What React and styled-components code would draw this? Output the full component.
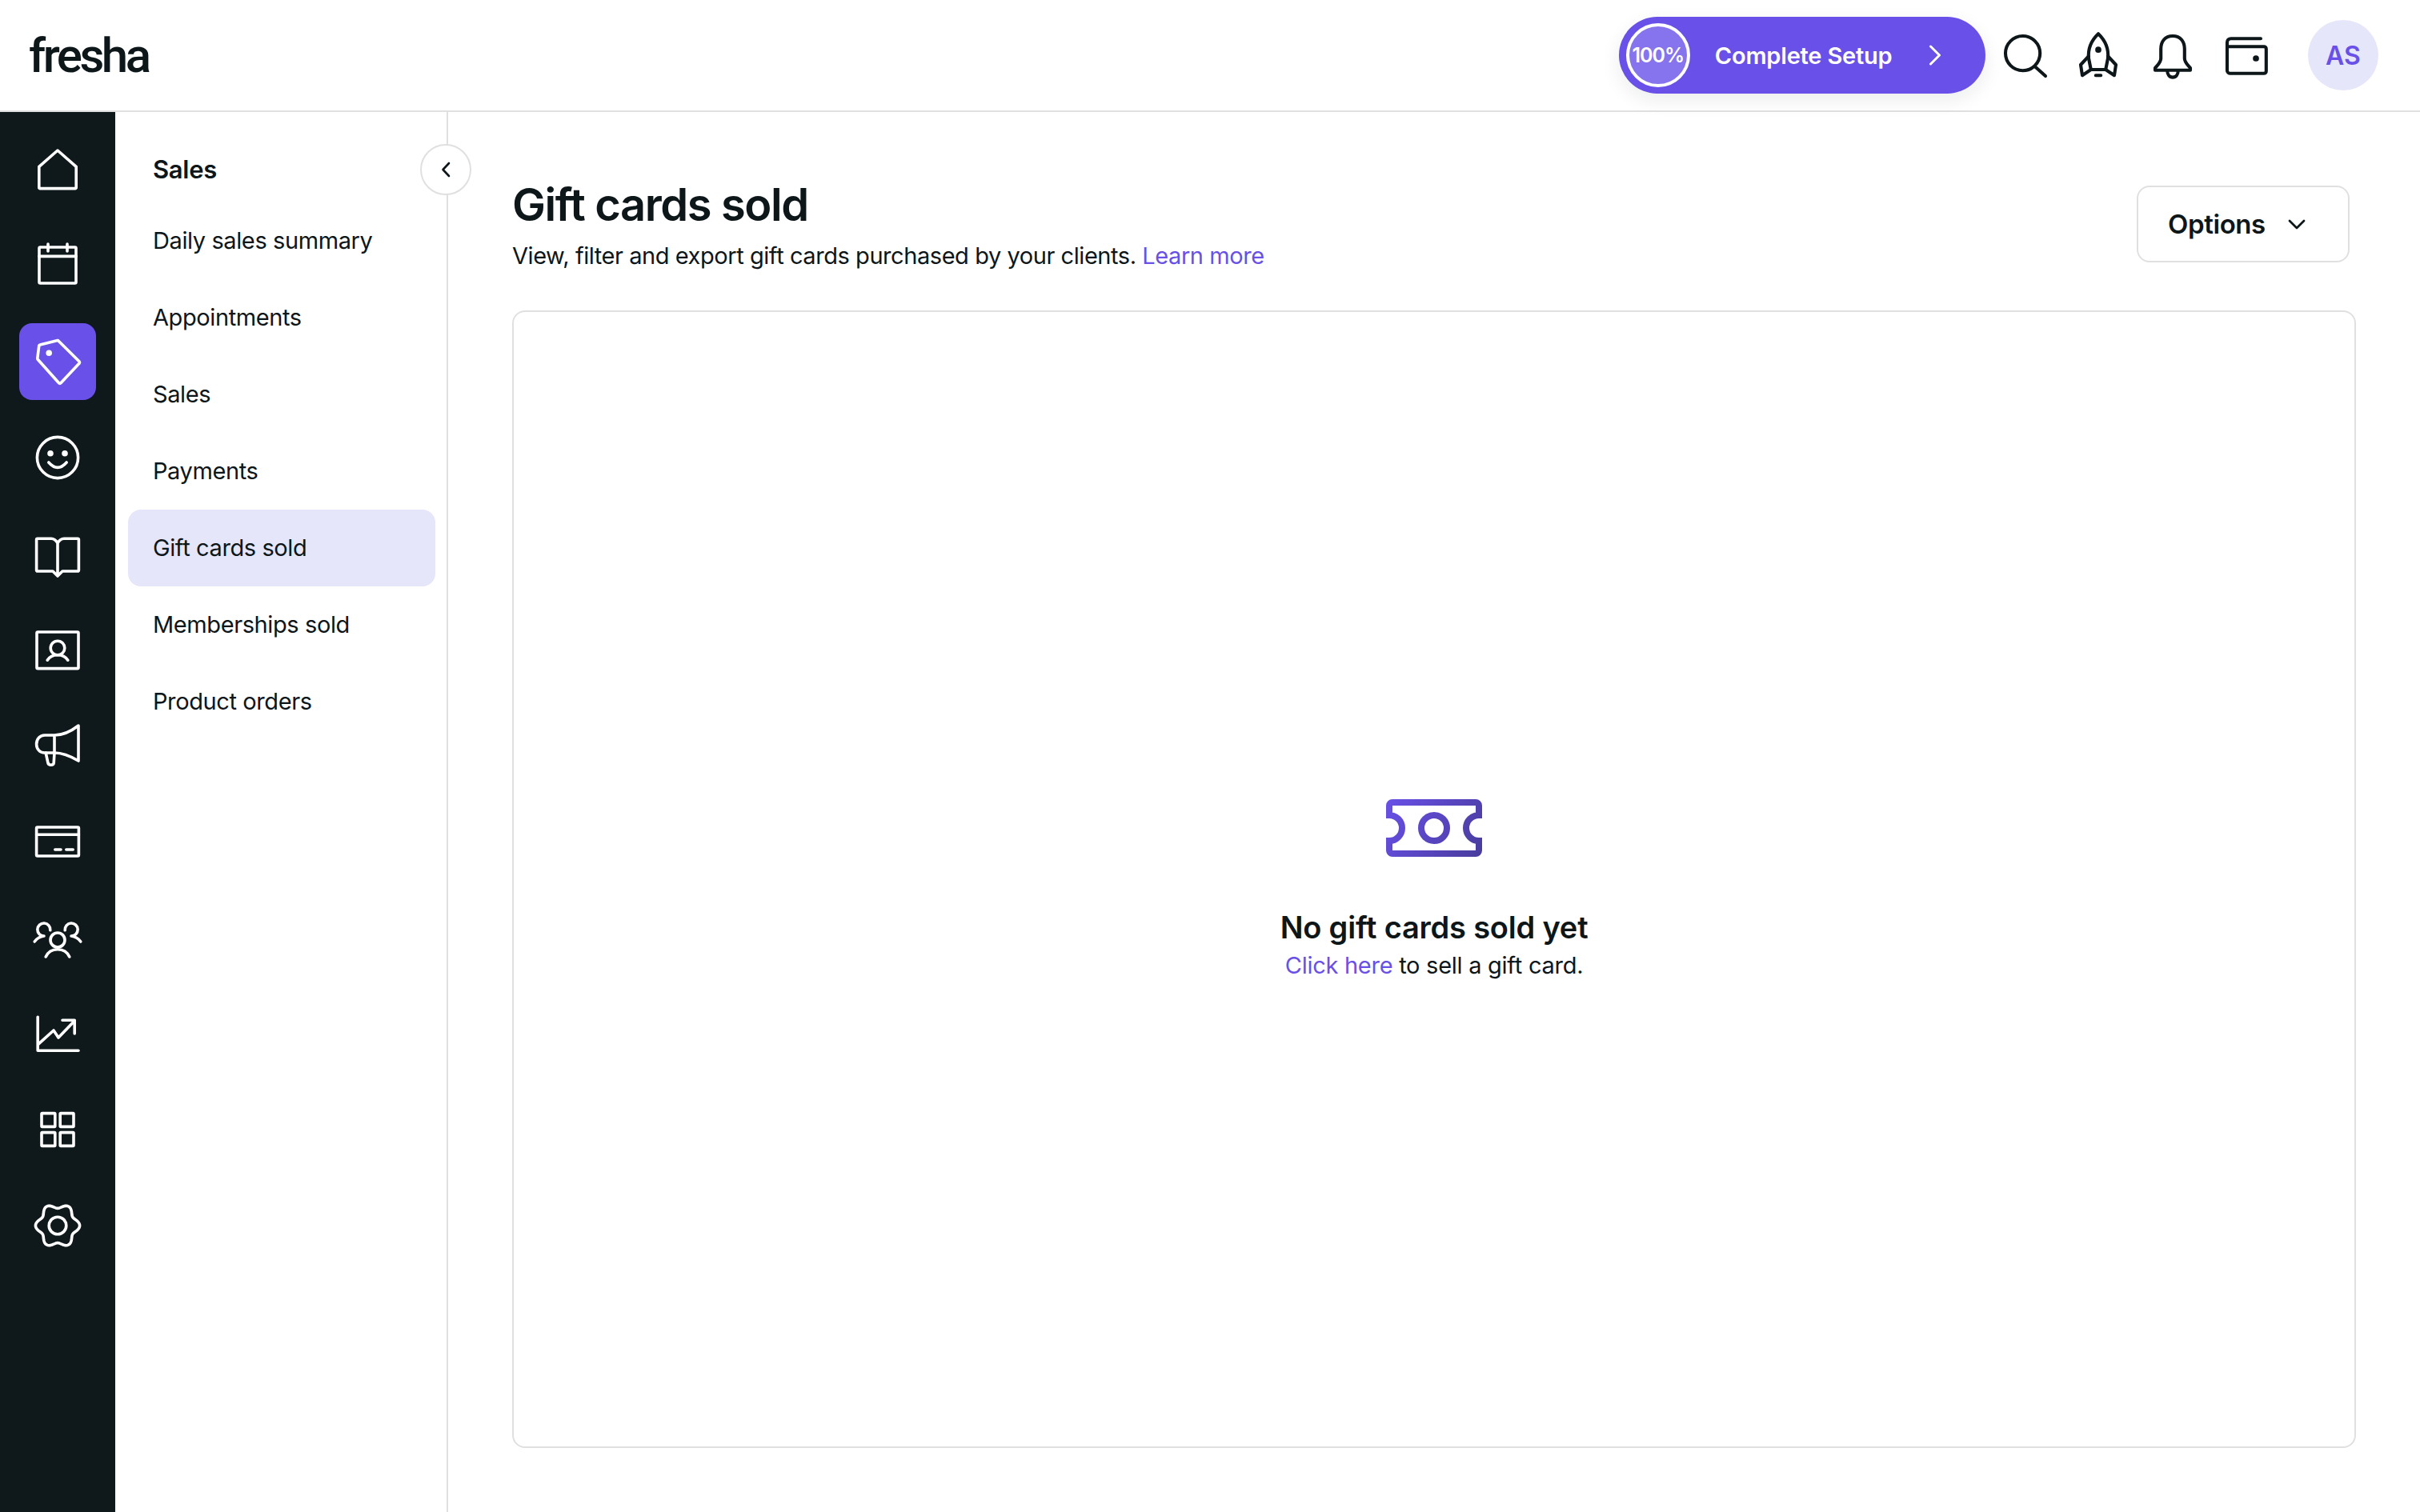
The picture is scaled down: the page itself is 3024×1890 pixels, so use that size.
import React from 'react';
import styled, { createGlobalStyle } from 'styled-components';

const GlobalStyle = createGlobalStyle`
  * { box-sizing: border-box; }
  html, body { margin: 0; padding: 0; background: #fff; }
  body { font-family: Inter, "Liberation Sans", sans-serif; color: #0d1619; }
`;

const navIcons = [
  { name: 'home' },
  { name: 'calendar' },
  { name: 'tag', active: true },
  { name: 'smile' },
  { name: 'book' },
  { name: 'contact' },
  { name: 'megaphone' },
  { name: 'card' },
  { name: 'team' },
  { name: 'chart' },
  { name: 'grid' },
  { name: 'gear' },
];

const subItems = [
  'Daily sales summary',
  'Appointments',
  'Sales',
  'Payments',
  'Gift cards sold',
  'Memberships sold',
  'Product orders',
];

// six soft lobes, the settings cog is wider than it is tall
const gearPath = () => {
  const pts = [];
  for (let i = 0; i < 120; i++) {
    const a = (i / 120) * Math.PI * 2;
    const r = 12.3 + 1.5 * Math.cos(6 * a);
    pts.push(`${(16 + r * Math.cos(a)).toFixed(2)} ${(16 + r * Math.sin(a)).toFixed(2)}`);
  }
  return `M${pts.join('L')}Z`;
};

const glyphs = {
  home: <path d="M16 4 L27.6 14.2 V27.2 a.6.6 0 0 1 -.6 .6 H5 a.6.6 0 0 1 -.6 -.6 V14.2 Z" />,
  calendar: (
    <>
      <rect x="4.5" y="4.5" width="23" height="22.5" rx=".6" />
      <path d="M4.5 10.2 H27.5 M10 2.5 V7 M22 2.5 V7" />
    </>
  ),
  tag: (
    <>
      <path d="M5 5.5 L16 2.8 a1 1 0 0 1 .6 .3 L29.6 16 a.8.8 0 0 1 0 1 L18 29.4 a.8.8 0 0 1 -1.2 0 L3.6 14.6 a1 1 0 0 1 -.2 -.7 L4.4 6 a.8.8 0 0 1 .6 -.5 Z" />
      <circle cx="10.6" cy="10.6" r="1" fill="currentColor" />
    </>
  ),
  smile: (
    <>
      <circle cx="16" cy="16" r="12.8" />
      <circle cx="11.5" cy="13.4" r="1" fill="currentColor" />
      <circle cx="20.5" cy="13.4" r="1" fill="currentColor" />
      <path d="M10.4 19 Q16 25.4 21.6 19" />
    </>
  ),
  book: (
    <path d="M16 9.4 C15 7.6 13.6 6.6 12 6.6 H3.4 a.6.6 0 0 0 -.6 .6 V26.4 a.6.6 0 0 0 .6 .6 H13 L16 30 L19 27 H28.6 a.6.6 0 0 0 .6 -.6 V7.2 a.6.6 0 0 0 -.6 -.6 H20 C18.4 6.6 17 7.6 16 9.4 Z M16 9.4 V28" />
  ),
  contact: (
    <>
      <rect x="3" y="5" width="26" height="22.8" rx=".6" />
      <circle cx="16" cy="15" r="4.4" />
      <path d="M9.6 22.6 C11 20.4 13.2 19.4 16 19.4 C18.8 19.4 21 20.4 22.4 22.6" />
    </>
  ),
  megaphone: (
    <>
      <path d="M29 3.5 C24.6 6.9 20 9.5 14 9.5 H8 C4.8 9.5 2.8 11.9 2.8 15.1 C2.8 18.1 4.8 20.5 8 20.5 H14 C20 20.5 24.6 22.9 29 25.5 Z M14 9.5 V20.5" />
      <path d="M8.6 20.5 L10 26.9 C10.4 28.5 13.4 28.5 13.6 26.9 L14 20.5" />
    </>
  ),
  card: (
    <>
      <rect x="2.8" y="7" width="26.4" height="18" rx=".6" />
      <path d="M2.8 11.6 H29.2 M14.4 21 H18 M21.4 21 H25.6" />
    </>
  ),
  team: (
    <>
      <circle cx="16" cy="17.5" r="4.5" />
      <path d="M8.6 28 C10 25 12.6 23.4 16 23.4 C19.4 23.4 22 25 23.4 28" />
      <path d="M11.4 11.4 A4 4 0 1 0 7.5 15 C5 15.3 3 16.6 1.6 18.5" />
      <path d="M20.6 11.4 A4 4 0 1 1 24.5 15 C27 15.3 29 16.6 30.4 18.5" />
    </>
  ),
  chart: (
    <>
      <path d="M3.6 5.6 V26.6 H29" />
      <path d="M4 22.6 L13.5 14 L16.5 18.5 L26 8.6 M19 7.6 H26.6 V16" />
    </>
  ),
  grid: (
    <>
      <rect x="6" y="5.8" width="8.4" height="8.4" rx=".4" />
      <rect x="17.6" y="5.8" width="8.4" height="8.4" rx=".4" />
      <rect x="6" y="17.8" width="8.4" height="8.4" rx=".4" />
      <rect x="17.6" y="17.8" width="8.4" height="8.4" rx=".4" />
    </>
  ),
  gear: (
    <>
      <path d={gearPath()} />
      <circle cx="16" cy="16" r="5.4" />
    </>
  ),
  search: (
    <>
      <circle cx="14.8" cy="14.8" r="10.8" />
      <path d="M22.6 23.2 L29 29" />
    </>
  ),
  rocket: (
    <>
      <path d="M16 2.6 C20.6 7 22.6 12 22 18 L20.6 25 H11.4 L10 18 C9.4 12 11.4 7 16 2.6 Z" />
      <path d="M10 16.6 L5 22 L6 28.6 L11.4 25 M22 16.6 L27 22 L26 28.6 L20.6 25 M14.4 28.6 H17.6" />
      <circle cx="16" cy="12.6" r=".9" fill="currentColor" />
    </>
  ),
  bell: (
    <path d="M16 4 C11 4 8.6 7.6 8.6 12 V18 C8.6 20.6 6.6 22 5 24 V25.4 H27 V24 C25.4 22 23.4 20.6 23.4 18 V12 C23.4 7.6 21 4 16 4 Z M12.6 25.4 C12.6 28 14 29.8 16 29.8 C18 29.8 19.4 28 19.4 25.4" />
  ),
  wallet: (
    <>
      <path d="M25 5.6 H6.4 C5 5.6 4 6.6 4 8 V25.6 C4 26.6 4.9 27.4 6 27.4 H27 C27.8 27.4 28.4 26.8 28.4 26 V12 C28.4 11.2 27.8 10.6 27 10.6 H4.4" />
      <circle cx="22" cy="18" r=".9" fill="currentColor" />
    </>
  ),
};

const Glyph = ({ name }) => <IconSvg viewBox="0 0 32 32">{glyphs[name]}</IconSvg>;

const App = () => (
  <Page>
    <GlobalStyle />
    <TopBar>
      <Logo>fresha</Logo>
      <TopActions>
        <SetupButton>
          <Progress>100%</Progress>
          <SetupLabel>Complete Setup</SetupLabel>
          <svg width="16" height="26" viewBox="0 0 16 26" fill="none" stroke="#fff" strokeWidth="3" strokeLinecap="round" strokeLinejoin="round">
            <path d="M2.5 2 L13.5 13 L2.5 24" />
          </svg>
        </SetupButton>
        <TopIcons>
          {['search', 'rocket', 'bell', 'wallet'].map((n) => (
            <TopIcon key={n}>
              <Glyph name={n} />
            </TopIcon>
          ))}
        </TopIcons>
        <Avatar>AS</Avatar>
      </TopActions>
    </TopBar>
    <Body>
      <Rail>
        {navIcons.map((item) => (
          <RailItem key={item.name} $active={item.active}>
            <Glyph name={item.name} />
          </RailItem>
        ))}
      </Rail>
      <SubNav>
        <SubTitle>Sales</SubTitle>
        {subItems.map((label) => (
          <SubItem key={label} $active={label === 'Gift cards sold'}>
            {label}
          </SubItem>
        ))}
        <Collapse>
          <svg width="12" height="20" viewBox="0 0 12 20" fill="none" stroke="#0d1619" strokeWidth="2.6" strokeLinecap="round" strokeLinejoin="round">
            <path d="M10 2 L2.5 10 L10 18" />
          </svg>
        </Collapse>
      </SubNav>
      <Main>
        <PageHead>
          <div>
            <Title>Gift cards sold</Title>
            <Subtitle>
              View, filter and export gift cards purchased by your clients. <LinkText>Learn more</LinkText>
            </Subtitle>
          </div>
          <OptionsButton>
            Options
            <svg width="22" height="13" viewBox="0 0 22 13" fill="none" stroke="#0d1619" strokeWidth="2.8" strokeLinecap="round" strokeLinejoin="round">
              <path d="M2 2 L11 11 L20 2" />
            </svg>
          </OptionsButton>
        </PageHead>
        <EmptyCard>
          <svg width="120" height="72" viewBox="0 0 120 72" fill="none">
            <defs>
              <linearGradient id="ticket" gradientUnits="userSpaceOnUse" x1="0" y1="0" x2="120" y2="72">
                <stop offset="0" stopColor="#6950e8" />
                <stop offset="1" stopColor="#483c9c" />
              </linearGradient>
            </defs>
            <g stroke="url(#ticket)" strokeWidth="8">
              <path d="M8 4 H112 a4 4 0 0 1 4 4 V20 a16 16 0 0 0 0 32 V64 a4 4 0 0 1 -4 4 H8 a4 4 0 0 1 -4 -4 V52 a16 16 0 0 0 0 -32 V8 a4 4 0 0 1 4 -4 Z" />
              <circle cx="60" cy="36" r="16" />
            </g>
          </svg>
          <EmptyTitle>No gift cards sold yet</EmptyTitle>
          <EmptyText>
            <LinkText>Click here</LinkText> to sell a gift card.
          </EmptyText>
        </EmptyCard>
      </Main>
    </Body>
  </Page>
);

const Page = styled.div`
  width: 3024px;
  height: 1890px;
  overflow: hidden;
  display: flex;
  flex-direction: column;
`;

const TopBar = styled.header`
  height: 140px;
  flex: none;
  display: flex;
  align-items: center;
  justify-content: space-between;
  padding: 0 52px 0 36px;
  border-bottom: 2px solid #e0e0e0;
`;

const Logo = styled.div`
  margin-top: 2px;
  font-family: Roboto, sans-serif;
  font-size: 60px;
  font-weight: 500;
  letter-spacing: -3.5px;
  line-height: 1;
`;

const TopActions = styled.div`
  display: flex;
  align-items: center;
`;

const SetupButton = styled.button`
  width: 458px;
  height: 96px;
  padding: 0 0 0 9px;
  display: flex;
  align-items: center;
  border: none;
  border-radius: 48px;
  background: #6950e8;
  color: #fff;
  font-family: inherit;
  box-shadow: 0 8px 24px rgba(13, 22, 25, 0.08);
`;

const Progress = styled.span`
  width: 80px;
  height: 80px;
  flex: none;
  display: flex;
  align-items: center;
  justify-content: center;
  border: 4px solid #fff;
  border-radius: 50%;
  background: #8673ee;
  font-size: 25px;
  font-weight: 600;
  letter-spacing: -1px;
`;

const SetupLabel = styled.span`
  width: 267px;
  margin-left: 31px;
  text-align: left;
  font-size: 29px;
  font-weight: 600;
  letter-spacing: -0.2px;
`;

const TopIcons = styled.div`
  display: flex;
  gap: 28.4px;
  margin-left: 17px;
`;

const TopIcon = styled.div`
  width: 64px;
  height: 64px;
  color: #0d1619;

  svg {
    stroke-width: 2.05;
  }
`;

const Avatar = styled.div`
  width: 88px;
  height: 88px;
  margin-left: 45px;
  display: flex;
  align-items: center;
  justify-content: center;
  border-radius: 50%;
  background: #e6e6fb;
  color: #6950e8;
  font-size: 32px;
  font-weight: 600;
`;

const IconSvg = styled.svg`
  width: 64px;
  height: 64px;
  display: block;
  fill: none;
  stroke: currentColor;
  stroke-width: 1.8;
  stroke-linecap: round;
  stroke-linejoin: round;
`;

const Body = styled.div`
  flex: 1;
  display: flex;
  min-height: 0;
`;

const Rail = styled.nav`
  width: 144px;
  flex: none;
  display: flex;
  flex-direction: column;
  align-items: center;
  gap: 24px;
  padding-top: 24px;
  background: #0f181b;
`;

const RailItem = styled.div`
  width: 96px;
  height: 96px;
  display: flex;
  align-items: center;
  justify-content: center;
  border-radius: 16px;
  color: #fff;
  background: ${(p) => (p.$active ? '#6950e8' : 'transparent')};
`;

const SubNav = styled.aside`
  position: relative;
  width: 416px;
  flex: none;
  padding: 40px 14px 0 16px;
  border-right: 2px solid #e0e0e0;
`;

const SubTitle = styled.div`
  height: 64px;
  margin-bottom: 9px;
  padding-left: 31px;
  font-size: 31px;
  font-weight: 600;
  line-height: 64px;
  letter-spacing: -0.3px;
`;

const SubItem = styled.div`
  height: 96px;
  padding-left: 31px;
  border-radius: 16px;
  font-size: 29px;
  line-height: 96px;
  letter-spacing: -0.4px;
  background: ${(p) => (p.$active ? '#e6e6fb' : 'transparent')};
`;

const Collapse = styled.button`
  position: absolute;
  top: 40px;
  right: -31px;
  width: 64px;
  height: 64px;
  padding: 0;
  display: flex;
  align-items: center;
  justify-content: center;
  border: 2px solid #e0e0e0;
  border-radius: 50%;
  background: #fff;
`;

const Main = styled.main`
  flex: 1;
  min-width: 0;
  padding: 80px 80px 80px 80px;
`;

const PageHead = styled.div`
  display: flex;
  justify-content: space-between;
  align-items: flex-start;
  margin-bottom: 48px;
  padding-right: 8px;
`;

const Title = styled.h1`
  margin: 0 0 8px;
  font-size: 56px;
  font-weight: 600;
  line-height: 72px;
  letter-spacing: -1.4px;
`;

const Subtitle = styled.p`
  margin: 0;
  font-size: 29px;
  line-height: 40px;
  letter-spacing: -0.44px;
`;

const LinkText = styled.span`
  color: #6950e8;
`;

const OptionsButton = styled.button`
  width: 266px;
  height: 96px;
  margin-top: 12px;
  padding: 0 53px 0 37px;
  display: flex;
  align-items: center;
  justify-content: space-between;
  border: 2px solid #e0e0e0;
  border-radius: 16px;
  background: #fff;
  color: #0d1619;
  font-family: inherit;
  font-size: 33px;
  font-weight: 600;
  letter-spacing: -0.4px;
`;

const EmptyCard = styled.section`
  height: 1422px;
  padding-top: 28px;
  display: flex;
  flex-direction: column;
  align-items: center;
  justify-content: center;
  border: 2px solid #e0e0e0;
  border-radius: 16px;
`;

const EmptyTitle = styled.h2`
  margin: 64px 0 0;
  font-size: 38px;
  font-weight: 600;
  line-height: 48px;
  letter-spacing: -0.2px;
`;

const EmptyText = styled.p`
  margin: 4px 0 0;
  font-size: 29px;
  line-height: 40px;
  letter-spacing: -0.27px;
`;

export default App;
